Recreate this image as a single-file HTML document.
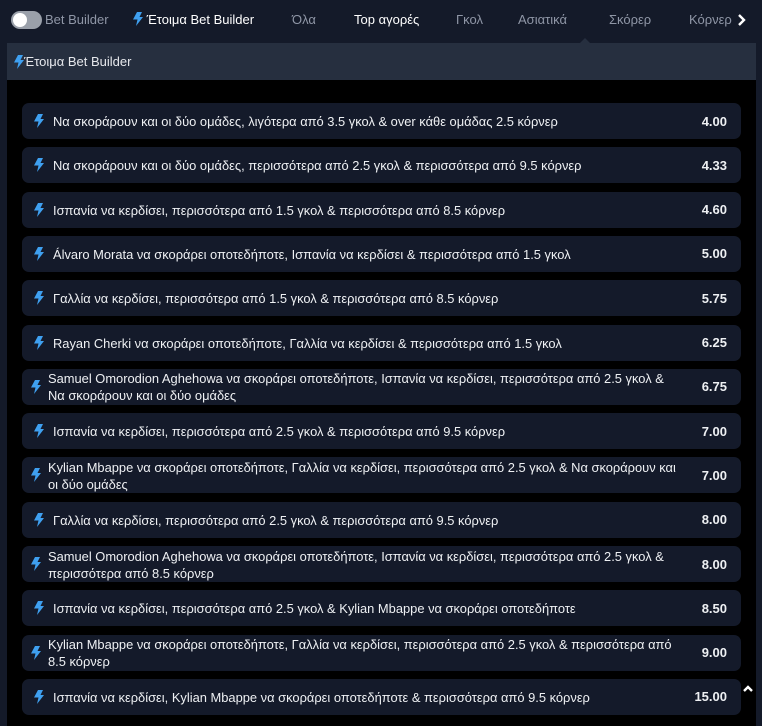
<!DOCTYPE html>
<html><head><meta charset="utf-8"><style>
*{box-sizing:border-box;margin:0;padding:0}
body{width:762px;height:726px;background:#141a29;font-family:"Liberation Sans","DejaVu Sans",sans-serif;color:#fff;overflow:hidden;position:relative}
.top{position:absolute;left:0;top:0;width:762px;height:40px;font-size:13px;white-space:nowrap}
.tog{position:absolute;left:11px;top:11px;width:31px;height:18px;border-radius:9px;background:#9aa0aa}
.tog:after{content:"";position:absolute;left:2px;top:2px;width:14px;height:14px;border-radius:50%;background:#fff}
.t{position:absolute;top:12px;color:#8f96a6}
.panel{position:absolute;left:7px;top:43px;width:749px;height:683px;background:#000}
.ph{height:37px;background:#262f3f;display:flex;align-items:center;padding-left:7px;font-size:13px;color:#e6e8ec}
.row{position:absolute;width:719px;height:36px;background:#141a2a;border-radius:7px;display:flex;align-items:center;font-size:12.9px;color:#eef0f3}
.row .ic{width:29px;display:flex;justify-content:center;flex:none;padding-left:4px}
.row .tx{flex:1;line-height:17px;padding-left:2px;padding-top:1px}
.row .od{width:60px;text-align:right;padding-right:14px;font-weight:bold;font-size:13px}
svg{display:block}
</style></head><body>
<div class="top">
<div class="tog"></div>
<span class="t" style="left:45px">Bet Builder</span>
<span class="t" style="left:133px;color:#fff"><svg style="display:inline;vertical-align:-2px" width="10" height="14" viewBox="0 0 10 14"><path d="M4 0h5L6.5 5H10L3 14l1.5-6.5H0z" fill="#3fa0f0"/></svg> Έτοιμα Bet Builder</span>
<span class="t" style="left:292px">Όλα</span>
<span class="t" style="left:354px;color:#fff">Top αγορές</span>
<span class="t" style="left:456px">Γκολ</span>
<span class="t" style="left:518px">Ασιατικά</span>
<span class="t" style="left:609px">Σκόρερ</span>
<span class="t" style="left:689px">Κόρνερ</span>
<svg style="position:absolute;left:737px;top:13px" width="9" height="14" viewBox="0 0 9 14"><path d="M2 2l5 5-5 5" stroke="#fff" stroke-width="2.4" fill="none"/></svg>
</div>
<div style="position:absolute;left:580px;top:38px;width:0;height:0;border-left:5px solid transparent;border-right:5px solid transparent;border-bottom:5px solid #262f3f"></div>
<div class="panel">
<div class="ph"><svg width="10" height="14" viewBox="0 0 10 14"><path d="M4 0h5L6.5 5H10L3 14l1.5-6.5H0z" fill="#3fa0f0"/></svg>Έτοιμα Bet Builder</div>
</div>
<div id="rows"></div>
<div style="position:absolute;left:742px;top:684px"><svg width="12" height="10" viewBox="0 0 12 10"><path d="M2 7l4-4 4 4" stroke="#fff" stroke-width="2.4" fill="none"/></svg></div>
<script>
var d=[["Να σκοράρουν και οι δύο ομάδες, λιγότερα από 3.5 γκολ & over κάθε ομάδας 2.5 κόρνερ","4.00"],
["Να σκοράρουν και οι δύο ομάδες, περισσότερα από 2.5 γκολ & περισσότερα από 9.5 κόρνερ","4.33"],
["Ισπανία να κερδίσει, περισσότερα από 1.5 γκολ & περισσότερα από 8.5 κόρνερ","4.60"],
["Álvaro Morata να σκοράρει οποτεδήποτε, Ισπανία να κερδίσει & περισσότερα από 1.5 γκολ","5.00"],
["Γαλλία να κερδίσει, περισσότερα από 1.5 γκολ & περισσότερα από 8.5 κόρνερ","5.75"],
["Rayan Cherki να σκοράρει οποτεδήποτε, Γαλλία να κερδίσει & περισσότερα από 1.5 γκολ","6.25"],
["Samuel Omorodion Aghehowa να σκοράρει οποτεδήποτε, Ισπανία να κερδίσει, περισσότερα από 2.5 γκολ & Να σκοράρουν και οι δύο ομάδες","6.75",1],
["Ισπανία να κερδίσει, περισσότερα από 2.5 γκολ & περισσότερα από 9.5 κόρνερ","7.00"],
["Kylian Mbappe να σκοράρει οποτεδήποτε, Γαλλία να κερδίσει, περισσότερα από 2.5 γκολ & Να σκοράρουν και οι δύο ομάδες","7.00",1],
["Γαλλία να κερδίσει, περισσότερα από 2.5 γκολ & περισσότερα από 9.5 κόρνερ","8.00"],
["Samuel Omorodion Aghehowa να σκοράρει οποτεδήποτε, Ισπανία να κερδίσει, περισσότερα από 2.5 γκολ & περισσότερα από 8.5 κόρνερ","8.00",1],
["Ισπανία να κερδίσει, περισσότερα από 2.5 γκολ & Kylian Mbappe να σκοράρει οποτεδήποτε","8.50"],
["Kylian Mbappe να σκοράρει οποτεδήποτε, Γαλλία να κερδίσει, περισσότερα από 2.5 γκολ & περισσότερα από 8.5 κόρνερ","9.00",1],
["Ισπανία να κερδίσει, Kylian Mbappe να σκοράρει οποτεδήποτε & περισσότερα από 9.5 κόρνερ","15.00"]];
var h="";
d.forEach(function(r,i){var top=103+i*44.3;
h+='<div class="row" style="left:22px;top:'+top+'px"><div class="ic" style="'+(r[2]?'width:24px;':'')+'"><svg width="10" height="14" viewBox="0 0 10 14"><path d="M4 0h5L6.5 5H10L3 14l1.5-6.5H0z" fill="#3fa0f0"/></svg></div><div class="tx">'+r[0]+'</div><div class="od">'+r[1]+'</div></div>';});
document.getElementById("rows").innerHTML=h;
</script>
</body></html>
